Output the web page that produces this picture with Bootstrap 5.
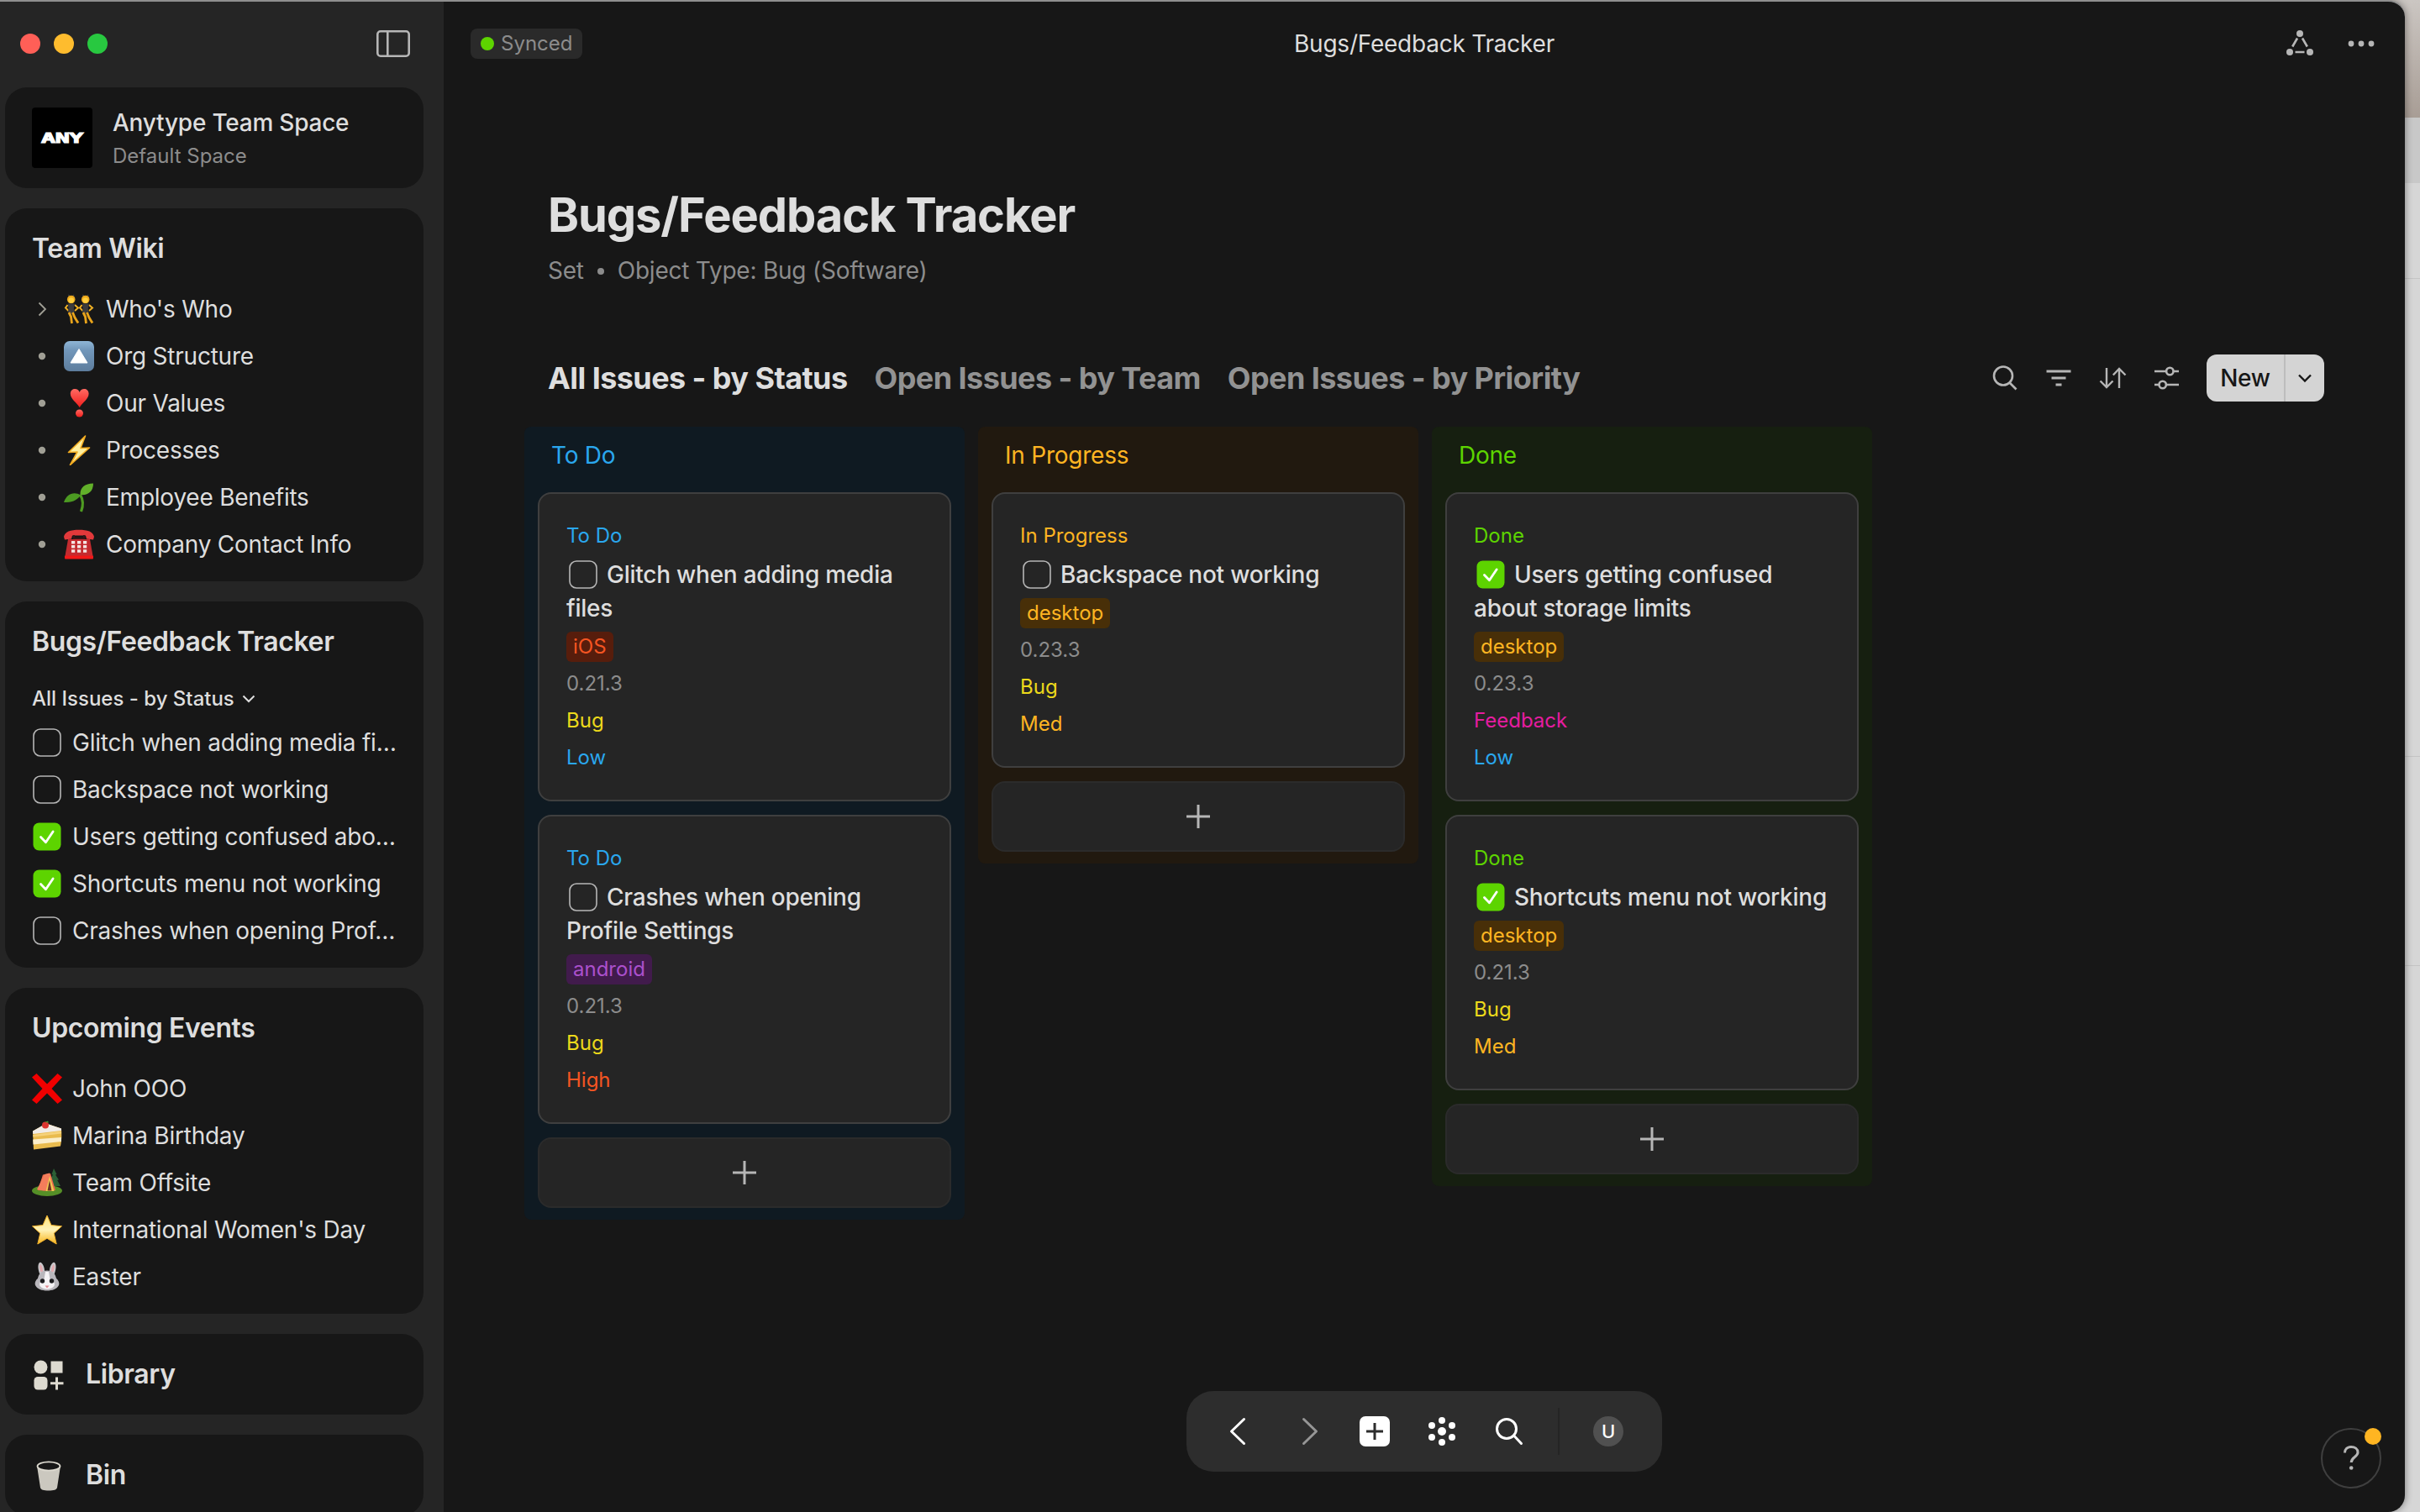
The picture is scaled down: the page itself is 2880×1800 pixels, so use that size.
<!DOCTYPE html>
<html lang="en" data-bs-theme="dark">
<head>
<meta charset="utf-8">
<title>Bugs/Feedback Tracker</title>
<link rel="stylesheet" href="https://cdn.jsdelivr.net/npm/bootstrap@5.3.0/dist/css/bootstrap.min.css">
<script src="https://cdn.jsdelivr.net/npm/bootstrap@5.3.0/dist/js/bootstrap.bundle.min.js"></script>
<style>
:root{--ink:#dedede;--muted:#8c8c8c;--base:#171717;--panel:#252525;--blue:#2aa7ee;--orange:#ffb522;--green:#5dd400;--yellow:#ecd91b;--red:#f55522;--pink:#e51ca0;--purple:#ab50cc}
body{width:2880px;height:1800px;overflow:hidden;background:#999;color:var(--ink);font-family:Inter,"Liberation Sans",sans-serif;font-size:28px;line-height:40px;letter-spacing:-.23px}
svg{display:block;flex:none}
.app-window{width:2862px;background:var(--base);border-radius:0 20px 20px 0;border-top:2px solid #8f8f8f;box-shadow:0 0 10px rgba(0,0,0,.45);z-index:2}
.backdrop-strip{position:absolute;left:2840px;top:0;width:40px;height:1800px;background:#d6d6d6}
.bd-top{height:140px;background:linear-gradient(#cbc6c2,#a89d95)}
.bd-bar{height:78px;background:#c8c8c8}
.bd-a{height:114px}.bd-b{height:569px}.bd-c{height:249px}
.bd-a,.bd-b,.bd-c{border-bottom:1px solid #c4c4c4}
.side{width:528px;background:var(--panel);padding-left:6px}
.side-top{height:102px;padding:0 40px 2px 18px}
.lights{gap:16px}.l-red{background:#ff5f57}.l-yellow{background:#febc2e}.l-green{background:#28c840}
.dot{width:24px;height:24px}
.widget{width:498px;background:var(--base);border-radius:26px;flex:none}
.w-space{height:120px;padding-left:32px}
.space-name{line-height:44px;font-weight:500}
.w-head{height:92px;line-height:96px;padding-left:32px;font-size:32px;font-weight:600;letter-spacing:-.38px}
.w-view{height:48px;line-height:48px;padding-left:32px;font-size:24px;font-weight:500;letter-spacing:0}
.w-row{height:56px;padding:0 24px 0 32px;gap:12px}
.w-row .tree{width:24px;margin-right:2px}
.w-row .tree ~ span{margin-left:2px}
.w-btn{height:96px;padding-left:32px;font-size:32px;font-weight:600;letter-spacing:-.38px}
.space-logo{width:72px;height:72px;background:#000;border-radius:4px}
.fs24{font-size:24px;line-height:36px;letter-spacing:0}
.muted{color:var(--muted)}
.main-top{height:102px;display:grid;grid-template-columns:1fr auto 1fr;padding:0 32px 2px;align-items:center}
.main-top .icons{gap:33px}
.synced{background:#2a2a2a;height:36px;border-radius:8px;padding:0 12px;gap:8px;justify-self:start;line-height:36px}
.page{padding:120px 96px 0 96px}
.page h1{color:var(--ink);font-size:56px;line-height:64px;font-weight:700;letter-spacing:-1.08px;margin:0 0 16px 28px}
.sub{line-height:36px;margin-left:28px;gap:15px}
.bar{height:56px;margin:82px 0 30px 28px}
.bar .tools{margin-right:28px}
.tabs{gap:32px;font-size:36px;font-weight:700;letter-spacing:-.57px}
.tabs .off{color:#929292}
.new-btn{height:56px;border-radius:12px;background:#d4d4d4;color:#171717;font-weight:500;overflow:hidden}
.new-main{width:94px;height:56px;border-right:2px solid #bdbdbd}
.new-drop{width:46px}
.board{gap:16px}
.lane{width:524px;border-radius:8px;padding:0 16px 14px}
.lane-head{height:78px;line-height:68px;padding-left:16px}
.lane-blue{background:#0f1a22}.lane-orange{background:#21190f}.lane-green{background:#161f10}
.issue{background:var(--panel);border:2px solid #3f3f3f;border-radius:16px;padding:32px;gap:8px;margin-bottom:16px;font-size:24px;line-height:36px;letter-spacing:0}
.issue .name{font-size:28px;line-height:40px;font-weight:500;letter-spacing:-.24px}
.issue .name svg{display:inline-block;vertical-align:top;margin-right:8px}
.tag{align-self:flex-start;border-radius:6px;padding:0 8px;height:36px}
.t-red{background:#571d0c;color:var(--red)}.t-purple{background:#411b4c;color:var(--purple)}.t-orange{background:#482f08;color:var(--orange)}
.c-blue{color:var(--blue)}.c-orange{color:var(--orange)}.c-green{color:var(--green)}.c-yellow{color:var(--yellow)}.c-red{color:var(--red)}.c-pink{color:var(--pink)}
.add{height:84px;border:2px solid #2b2b2b;border-radius:16px;background:var(--panel)}
.dock{position:absolute;left:1412px;top:1656px;width:566px;height:96px;border-radius:32px;background:#2d2d2d;padding-left:44px;gap:40px}
.dock .sep{width:2px;height:56px;background:#252525;margin:0 0 0 -2px}
.avatar{width:36px;height:36px;background:#505050;color:#fff;font-size:22px;font-weight:500;line-height:36px}
.help{position:absolute;left:2762px;top:1700px;width:72px;height:72px;border:2px solid #3f3f3f;background:var(--base)}
.help-dot{position:absolute;left:50px;top:-2px;width:20px;height:20px;background:var(--orange)}
</style>
</head>
<body class="position-relative">
<svg width="0" height="0" class="position-absolute">
<defs>
<linearGradient id="gBlue" x1="0" y1="0" x2="0" y2="1"><stop offset="0" stop-color="#8fb6d6"/><stop offset=".3" stop-color="#7297ba"/><stop offset="1" stop-color="#5d7d9d"/></linearGradient>
<linearGradient id="gStar" x1="0" y1="0" x2="0" y2="1"><stop offset="0" stop-color="#ffe27a"/><stop offset=".5" stop-color="#fff3b8"/><stop offset="1" stop-color="#f7b51d"/></linearGradient>
<linearGradient id="gHeart" x1="0" y1="0" x2="0" y2="1"><stop offset="0" stop-color="#ff6a62"/><stop offset="1" stop-color="#f01d1b"/></linearGradient>
<symbol id="box" viewBox="0 0 36 36"><rect x="2" y="2" width="32" height="32" rx="8" fill="none" stroke="#b6b6b6" stroke-width="1.6"/></symbol>
<symbol id="boxOn" viewBox="0 0 36 36"><rect x="1.5" y="1.5" width="33" height="33" rx="7" fill="#5dd400"/><path d="M10.500 18.500l6 6.200 8.600-12.700" fill="none" stroke="#fff" stroke-width="2.800" stroke-linecap="round" stroke-linejoin="round"/></symbol>
<symbol id="plus" viewBox="0 0 40 40"><path d="M20 6v28M6 20h28" stroke="#b6b6b6" stroke-width="3"/></symbol>
<symbol id="bullet" viewBox="0 0 24 24"><circle cx="12" cy="12" r="4.200" fill="#a09f95"/></symbol>
<g id="dancer"><path d="M4.500 4L4.800 .8 6.500 3M11 4l-.3-3.200L9 3" fill="#3a3a3a" stroke="#3a3a3a"/><circle cx="7.700" cy="6.500" r="4.800" fill="#eda91c"/><circle cx="7.700" cy="7.500" r="3.200" fill="#ffcf3e"/><path d="M3.500 13L1 16.500 4.500 20M12 13l4 3.500-4 3.500" fill="none" stroke="#efb024" stroke-width="2"/><path d="M3.800 11.500h8l-1 6 1 4.500-4 2-4-2 .8-4.500z" fill="#3b3b3d"/><path d="M5 22l2.500 5 1 8M9.500 22l2.500 6 4 6.500" fill="none" stroke="#e9a41b" stroke-width="2.800"/></g>
<symbol id="e-who" viewBox="0 0 36 36"><use href="#dancer" x="1"/><use href="#dancer" x="18"/></symbol>
<symbol id="e-org" viewBox="0 0 36 36"><rect width="36" height="36" rx="7" fill="url(#gBlue)"/><path d="M18 9.500L28 26H8z" fill="#fff" stroke="#fff" stroke-linejoin="round"/></symbol>
<symbol id="e-val" viewBox="0 0 36 36"><path d="M18.700 23C15 17 7.800 13 7.800 6.800 7.800 3 10.500 1 13.200 1c2.600 0 4.600 1.500 5.500 4 .9-2.500 2.900-4 5.500-4 2.700 0 5.400 2 5.400 5.800C29.600 13 22.400 17 18.700 23z" fill="url(#gHeart)"/><circle cx="18.500" cy="30" r="4.500" fill="url(#gHeart)"/></symbol>
<symbol id="e-bolt" viewBox="0 0 36 36"><path d="M25.500 1L5.500 20.500 16 20 7.500 35.500 30.500 15 20 15.500z" fill="#fff0a0" stroke="#f2ab1f" stroke-width="1.600" stroke-linejoin="round"/></symbol>
<symbol id="e-plant" viewBox="0 0 36 36"><path d="M20.500 35C24 26 22.500 20 19.500 15" fill="none" stroke="#4f9c22" stroke-width="3.200"/><path d="M19.500 15C19 6 25 2 35 1.500 35 11 29 16 19.500 15z" fill="#62b02a"/><path d="M20 15.500C12 10.500 3 14 0 24 9 24 15 22.500 20 15.500z" fill="#4c9a22"/></symbol>
<symbol id="e-tel" viewBox="0 0 36 36"><path d="M1 34.500L5 12h26l4 22.500z" fill="#c42b2f"/><path d="M0 9C1 3 8 .8 18 .8S35 3 36 9l-1 3.500-8-1-1-4H10l-1 4-8 1z" fill="#e2393b"/><path d="M12 7v4h12V7" fill="none" stroke="#3b1517" stroke-width="2"/><rect x="1" y="31.500" width="34" height="4" rx="1" fill="#f01818"/><g fill="#f4e4e2"><path d="M9 14h4.200v3.500H9zM16 14h4.200v3.500H16zM23 14h4.200v3.500H23zM9 19h4.200v3.500H9zM16 19h4.200v3.500H16zM23 19h4.200v3.500H23zM9 24.200h4.200v3.500H9zM16 24.200h4.200v3.500H16zM23 24.200h4.200v3.500H23z"/></g></symbol>
<symbol id="e-cross" viewBox="0 0 36 36"><path d="M5.500 0L18 12.500 30.500 0 36 4.500 23.500 18 36 31.500 30.500 36 18 23.500 5.500 36 0 31.500 12.500 18 0 4.500z" fill="#f10000"/></symbol>
<symbol id="e-cake" viewBox="0 0 36 36"><path d="M1 12.500L17 3.500l18 6c.5 6.500.5 14-1 21L2 34.500z" fill="#e9bb4e"/><path d="M1 12.500L17 3.500l18 6L35 12 1.300 16z" fill="#f1ece7"/><path d="M1.200 22.500L35 20v5L1.500 28.500z" fill="#fbeecb"/><path d="M1.200 17L35 12.500v3L1.300 19.500z" fill="#f6d27a"/><circle cx="16" cy="5.500" r="4" fill="#dd3530"/><path d="M15 2l4-1.500 1 2z" fill="#4e9433"/></symbol>
<symbol id="e-tent" viewBox="0 0 36 36"><ellipse cx="18" cy="27.500" rx="18" ry="6.500" fill="#558f27"/><path d="M26 1l3.500 7-1.500 .5 4 6-1.800.5 3.800 7H19l3.500-7-1.500-.5 4-6-1.500-.5z" fill="#2c5f35"/><path d="M13 8.500l9-1.500L28 27l-12 .5L7 27z" fill="#ee6b4b"/><path d="M6 26L15 8l6-1.500L26 27l-12 .5z" fill="#f47d5b"/><path d="M21 10l-4.500 18h10z" fill="#f3c951"/><path d="M21 15l-2.500 12.500h5z" fill="#6b3526"/></symbol>
<symbol id="e-star" viewBox="0 0 36 36"><path d="M18 1l5 11.500 12.500 1.300-9.300 8.400 3 12.800L18 28.300 6.800 35l3-12.800L.5 13.800 13 12.500z" fill="url(#gStar)" stroke="#f3b229" stroke-width="1" stroke-linejoin="round"/></symbol>
<symbol id="e-bunny" viewBox="0 0 36 36"><path d="M9.500 15C6.500 8 7 2 9.500 .8c3 0 6 6 5.500 12zM26.500 15c3-7 2.500-13 0-14.200-3 0-6 6-5.500 12z" fill="#c9c7ca"/><path d="M10.500 12c-1.500-4-1.500-7.500-.5-9 2 2 3 5 3 9zM25.500 12c1.500-4 1.500-7.500.5-9-2 2-3 5-3 9z" fill="#e3a9ae"/><path d="M18 10.500c7.500 0 10 5 11 9.500 2.500 2 4 5 3 8-2 4.500-8 6.500-14 6.500S6 32.500 4 28c-1-3 .5-6 3-8 1-4.500 3.500-9.500 11-9.500z" fill="#b9b7bc"/><path d="M16 12h4l1.500 9c5 2 7 6 4 9-4 3.500-11 3.500-15 0-3-3-1-7 4-9z" fill="#f5f3f5"/><circle cx="12.500" cy="23" r="2.700" fill="#1d1d1f"/><circle cx="23.500" cy="23" r="2.700" fill="#1d1d1f"/><path d="M15.500 28.500h5L18 31.500z" fill="#e08790"/></symbol>
</defs>
</svg>

<div class="backdrop-strip"><div class="bd-top"></div><div class="bd-bar"></div><div class="bd-a"></div><div class="bd-b"></div><div class="bd-c"></div></div>

<div class="app-window d-flex position-relative vh-100 overflow-hidden">
  <aside class="side d-flex flex-column flex-shrink-0">
    <div class="side-top d-flex align-items-center flex-shrink-0">
      <div class="lights d-flex">
        <span class="dot rounded-circle l-red"></span><span class="dot rounded-circle l-yellow"></span><span class="dot rounded-circle l-green"></span>
      </div>
      <svg class="ms-auto" width="40" height="32" viewBox="0 0 40 32" fill="none" stroke="#b6b6b6" stroke-width="2.600"><rect x="1.300" y="1.300" width="37.400" height="29.400" rx="3.500"/><path d="M13.300 1v30"/></svg>
    </div>
    <div class="d-flex flex-column gap-4">
      <section class="widget w-space d-flex align-items-center">
        <svg class="space-logo" viewBox="0 0 72 72"><text x="11" y="42.200" textLength="50" lengthAdjust="spacingAndGlyphs" font-family="DejaVu Sans Mono" font-weight="700" font-size="16.500" fill="#fff" stroke="#fff" stroke-width="1">ANY</text></svg>
        <div class="ms-4">
          <div class="space-name">Anytype Team Space</div>
          <div class="fs24 muted">Default Space</div>
        </div>
      </section>

      <section class="widget pb-3">
        <div class="w-head">Team Wiki</div>
        <div class="w-row d-flex align-items-center"><svg class="tree" height="24" viewBox="0 0 24 24"><path d="M8.500 4.500l7.500 7.500-7.500 7.500" fill="none" stroke="#a09f95" stroke-width="1.800"/></svg><svg width="36" height="36"><use href="#e-who"/></svg><span>Who's Who</span></div>
        <div class="w-row d-flex align-items-center"><svg class="tree" height="24"><use href="#bullet"/></svg><svg width="36" height="36"><use href="#e-org"/></svg><span>Org Structure</span></div>
        <div class="w-row d-flex align-items-center"><svg class="tree" height="24"><use href="#bullet"/></svg><svg width="36" height="36"><use href="#e-val"/></svg><span>Our Values</span></div>
        <div class="w-row d-flex align-items-center"><svg class="tree" height="24"><use href="#bullet"/></svg><svg width="36" height="36"><use href="#e-bolt"/></svg><span>Processes</span></div>
        <div class="w-row d-flex align-items-center"><svg class="tree" height="24"><use href="#bullet"/></svg><svg width="36" height="36"><use href="#e-plant"/></svg><span>Employee Benefits</span></div>
        <div class="w-row d-flex align-items-center"><svg class="tree" height="24"><use href="#bullet"/></svg><svg width="36" height="36"><use href="#e-tel"/></svg><span>Company Contact Info</span></div>
      </section>

      <section class="widget pb-3">
        <div class="w-head">Bugs/Feedback Tracker</div>
        <div class="w-view d-flex align-items-center"><span>All Issues - by Status</span><svg class="ms-2" width="18" height="12" viewBox="0 0 18 12"><path d="M2.500 2.500L9 9l6.500-6.500" fill="none" stroke="#dedede" stroke-width="2"/></svg></div>
        <div class="w-row d-flex align-items-center"><svg width="36" height="36"><use href="#box"/></svg><span class="text-nowrap">Glitch when adding media fi…</span></div>
        <div class="w-row d-flex align-items-center"><svg width="36" height="36"><use href="#box"/></svg><span class="text-nowrap">Backspace not working</span></div>
        <div class="w-row d-flex align-items-center"><svg width="36" height="36"><use href="#boxOn"/></svg><span class="text-nowrap">Users getting confused abo…</span></div>
        <div class="w-row d-flex align-items-center"><svg width="36" height="36"><use href="#boxOn"/></svg><span class="text-nowrap">Shortcuts menu not working</span></div>
        <div class="w-row d-flex align-items-center"><svg width="36" height="36"><use href="#box"/></svg><span class="text-nowrap">Crashes when opening Prof…</span></div>
      </section>

      <section class="widget pb-3">
        <div class="w-head">Upcoming Events</div>
        <div class="w-row d-flex align-items-center"><svg width="36" height="36"><use href="#e-cross"/></svg><span>John OOO</span></div>
        <div class="w-row d-flex align-items-center"><svg width="36" height="36"><use href="#e-cake"/></svg><span>Marina Birthday</span></div>
        <div class="w-row d-flex align-items-center"><svg width="36" height="36"><use href="#e-tent"/></svg><span>Team Offsite</span></div>
        <div class="w-row d-flex align-items-center"><svg width="36" height="36"><use href="#e-star"/></svg><span>International Women's Day</span></div>
        <div class="w-row d-flex align-items-center"><svg width="36" height="36"><use href="#e-bunny"/></svg><span>Easter</span></div>
      </section>

      <section class="widget w-btn d-flex align-items-center">
        <svg width="40" height="40" viewBox="0 0 40 40" fill="#dddad0"><circle cx="10.500" cy="11.500" r="8"/><rect x="22.500" y="4.500" width="14" height="14"/><rect x="2.500" y="23" width="16" height="15.500" rx="4.500"/><path d="M29.500 23.500v15M22 30.800h15.500" stroke="#dddad0" stroke-width="3"/></svg>
        <span class="ms-4">Library</span>
      </section>
      <section class="widget w-btn d-flex align-items-center">
        <svg width="40" height="40" viewBox="0 0 40 40"><path d="M6 9l4 26c.5 2.500 4 3.500 10 3.500s9.500-1 10-3.500l4-26c-3 7-25 7-28 0z" fill="#cbc8bf"/><ellipse cx="20" cy="9.500" rx="13.500" ry="5.200" fill="#171717" stroke="#dddad0" stroke-width="1.800"/></svg>
        <span class="ms-4">Bin</span>
      </section>
    </div>
  </aside>

  <main class="flex-grow-1">
    <header class="main-top">
      <div class="synced d-flex align-items-center fs24 muted"><svg width="16" height="16"><circle cx="8" cy="8" r="8" fill="#5dd400"/></svg><span>Synced</span></div>
      <div>Bugs/Feedback Tracker</div>
      <div class="icons d-flex justify-content-end">
        <svg width="40" height="40" viewBox="0 0 40 40" fill="none" stroke="#b6b6b6" stroke-width="2.600"><g fill="#b6b6b6" stroke="none"><circle cx="20" cy="8" r="4"/><circle cx="8" cy="30" r="4"/><circle cx="32" cy="30" r="4"/></g><path d="M17 13.500l-5.800 10M23 13.500l5.800 10M14.500 30h11"/></svg>
        <svg width="40" height="40" viewBox="0 0 40 40" fill="#b6b6b6"><circle cx="8" cy="20" r="3.400"/><circle cx="20" cy="20" r="3.400"/><circle cx="32" cy="20" r="3.400"/></svg>
      </div>
    </header>

    <div class="page">
      <h1>Bugs/Feedback Tracker</h1>
      <div class="sub d-flex align-items-center muted"><span>Set</span><svg width="10" height="10"><circle cx="5" cy="6" r="4" fill="#8c8c8c"/></svg><span>Object Type: Bug (Software)</span></div>

      <div class="bar d-flex align-items-center">
        <div class="tabs d-flex"><span>All Issues - by Status</span><span class="off">Open Issues - by Team</span><span class="off">Open Issues - by Priority</span></div>
        <div class="tools d-flex align-items-center gap-4 ms-auto">
          <svg width="40" height="40" viewBox="0 0 40 40" fill="none" stroke="#b6b6b6" stroke-width="2.600"><circle cx="18" cy="17.500" r="11"/><path d="M25.500 25.500l8 8"/></svg>
          <svg width="40" height="40" viewBox="0 0 40 40" fill="none" stroke="#b6b6b6" stroke-width="2.800"><path d="M5.500 12h29M11.500 20h17M16.500 28h7"/></svg>
          <svg width="40" height="40" viewBox="0 0 40 40" fill="none" stroke="#b6b6b6" stroke-width="2.400"><path d="M13 8v22.500M5.500 23.500l7.500 7.500 7.500-7.500M28 32V9.500M20.800 16.500L28 9l7.500 7.500"/></svg>
          <svg width="40" height="40" viewBox="0 0 40 40" fill="none" stroke="#b6b6b6" stroke-width="2.600"><path d="M6 12h14M28.500 12H35M6 28h5.500M20 28h15"/><circle cx="24.300" cy="12" r="4.200"/><circle cx="15.700" cy="28" r="4.200"/></svg>
        </div>
        <div class="new-btn d-flex align-items-center"><div class="new-main d-flex align-items-center justify-content-center">New</div><div class="new-drop d-flex justify-content-center"><svg width="18" height="12" viewBox="0 0 18 12"><path d="M2 2.500L9 9.500l7-7" fill="none" stroke="#171717" stroke-width="2.400"/></svg></div></div>
      </div>

      <div class="board d-flex align-items-start">
        <section class="lane lane-blue">
          <div class="lane-head c-blue">To Do</div>
          <article class="issue d-flex flex-column"><div class="c-blue">To Do</div><div class="name"><svg width="40" height="40" viewBox="-2 -2 40 40"><use href="#box" width="36" height="36"/></svg><span>Glitch when adding media files</span></div><div class="tag t-red">iOS</div><div class="muted">0.21.3</div><div class="c-yellow">Bug</div><div class="c-blue">Low</div></article>
          <article class="issue d-flex flex-column"><div class="c-blue">To Do</div><div class="name"><svg width="40" height="40" viewBox="-2 -2 40 40"><use href="#box" width="36" height="36"/></svg><span>Crashes when opening Profile Settings</span></div><div class="tag t-purple">android</div><div class="muted">0.21.3</div><div class="c-yellow">Bug</div><div class="c-red">High</div></article>
          <div class="add d-flex align-items-center justify-content-center"><svg width="40" height="40"><use href="#plus"/></svg></div>
        </section>
        <section class="lane lane-orange">
          <div class="lane-head c-orange">In Progress</div>
          <article class="issue d-flex flex-column"><div class="c-orange">In Progress</div><div class="name"><svg width="40" height="40" viewBox="-2 -2 40 40"><use href="#box" width="36" height="36"/></svg><span>Backspace not working</span></div><div class="tag t-orange">desktop</div><div class="muted">0.23.3</div><div class="c-yellow">Bug</div><div class="c-orange">Med</div></article>
          <div class="add d-flex align-items-center justify-content-center"><svg width="40" height="40"><use href="#plus"/></svg></div>
        </section>
        <section class="lane lane-green">
          <div class="lane-head c-green">Done</div>
          <article class="issue d-flex flex-column"><div class="c-green">Done</div><div class="name"><svg width="40" height="40" viewBox="-2 -2 40 40"><use href="#boxOn" width="36" height="36"/></svg><span>Users getting confused about storage limits</span></div><div class="tag t-orange">desktop</div><div class="muted">0.23.3</div><div class="c-pink">Feedback</div><div class="c-blue">Low</div></article>
          <article class="issue d-flex flex-column"><div class="c-green">Done</div><div class="name"><svg width="40" height="40" viewBox="-2 -2 40 40"><use href="#boxOn" width="36" height="36"/></svg><span>Shortcuts menu not working</span></div><div class="tag t-orange">desktop</div><div class="muted">0.21.3</div><div class="c-yellow">Bug</div><div class="c-orange">Med</div></article>
          <div class="add d-flex align-items-center justify-content-center"><svg width="40" height="40"><use href="#plus"/></svg></div>
        </section>
      </div>
    </div>
  </main>
</div>

<nav class="dock d-flex align-items-center z-3">
  <svg width="40" height="40" viewBox="0 0 40 40" fill="none" stroke="#fff" stroke-width="3" stroke-linecap="round" stroke-linejoin="round"><path d="M24.500 5.500L9.500 20l15 14.500"/></svg>
  <svg width="40" height="40" viewBox="0 0 40 40" fill="none" stroke="#969696" stroke-width="3" stroke-linecap="round" stroke-linejoin="round"><path d="M15.500 5.500L30.500 20l-15 14.500"/></svg>
  <svg width="40" height="40" viewBox="0 0 40 40"><rect x="2" y="2" width="36" height="36" rx="7" fill="#fff"/><path d="M20 10v20M10 20h20" stroke="#2d2d2d" stroke-width="3"/></svg>
  <svg width="40" height="40" viewBox="0 0 40 40" fill="#fff"><circle cx="20" cy="20" r="5"/><circle cx="20" cy="7" r="4"/><circle cx="20" cy="33" r="4"/><circle cx="8" cy="13" r="4"/><circle cx="32" cy="13" r="4"/><circle cx="8" cy="27" r="4"/><circle cx="32" cy="27" r="4"/></svg>
  <svg width="40" height="40" viewBox="0 0 40 40" fill="none" stroke="#fff" stroke-width="3" stroke-linecap="round"><circle cx="17" cy="17" r="11.500"/><path d="M26.500 26l8 8.500"/></svg>
  <span class="sep"></span>
  <span class="avatar rounded-circle text-center">U</span>
</nav>
<div class="help rounded-circle d-flex align-items-center justify-content-center z-3">
  <svg width="24" height="32" viewBox="0 0 24 32"><path d="M4.500 9.500C4.500 5 7.500 2.500 12 2.500s8 2.500 8 6.500c0 5.500-7.800 5.500-7.800 12" fill="none" stroke="#b6b6b6" stroke-width="3"/><circle cx="12.200" cy="27.500" r="2.300" fill="#b6b6b6"/></svg>
  <span class="help-dot rounded-circle"></span>
</div>
</body>
</html>
